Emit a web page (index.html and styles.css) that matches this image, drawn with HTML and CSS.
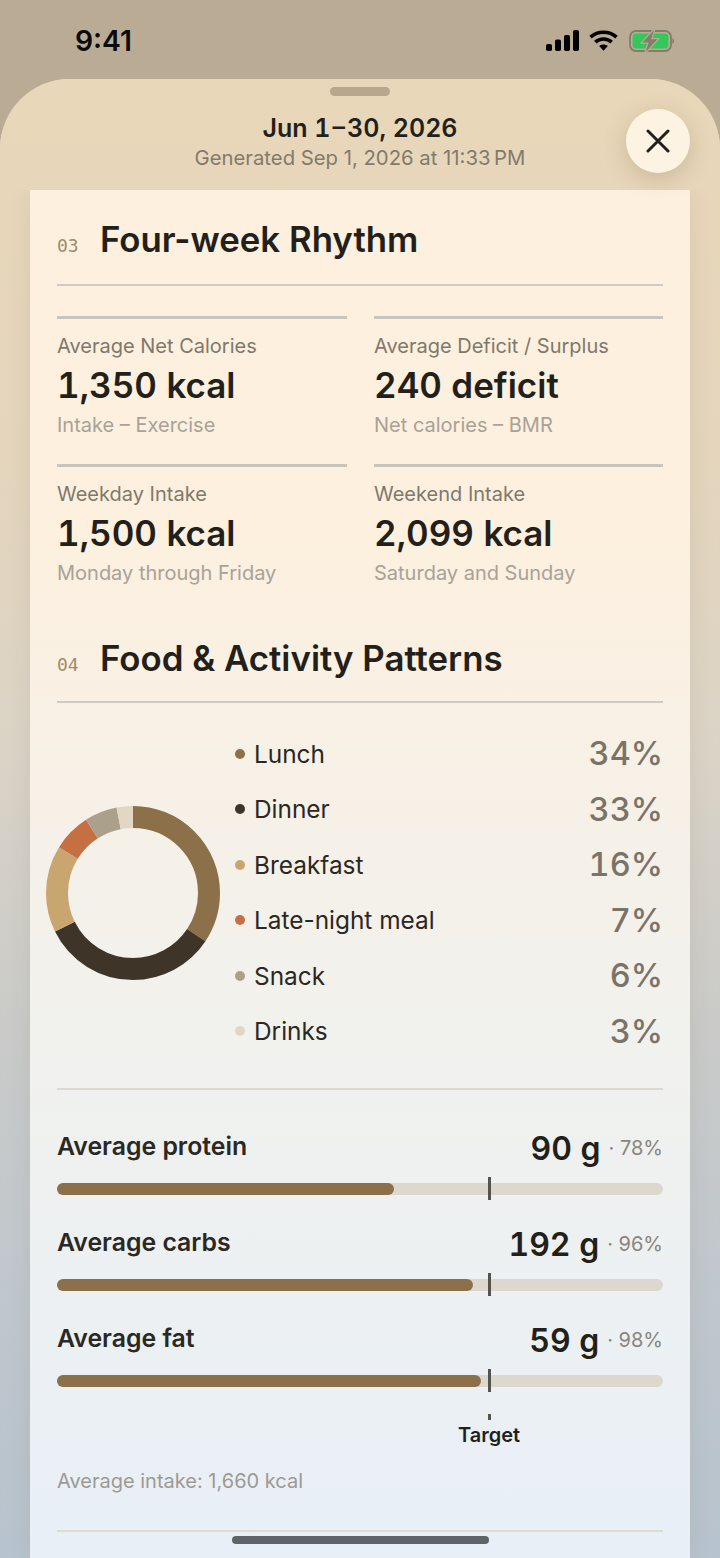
FILE: index.html
```html
<!DOCTYPE html>
<html lang="en">
<head>
<meta charset="utf-8">
<title>Report</title>
<link rel="stylesheet" href="styles.css">
</head>
<body>
<div class="screen">
  <div class="statusbar">
    <span class="time">9:41</span>
    <div class="status-icons">
      <svg class="ic-signal" width="33" height="21" viewBox="0 0 33 21"><rect x="0" y="14" width="6" height="7" rx="1.8"/><rect x="9" y="9.5" width="6" height="11.5" rx="1.8"/><rect x="18" y="5" width="6" height="16" rx="1.8"/><rect x="27" y="0" width="6" height="21" rx="1.8"/></svg>
      <svg class="ic-wifi" width="29" height="21" viewBox="0 0 29 21"><path d="M1.5 7.2C8.8 .6 20.2 .6 27.5 7.2" fill="none" stroke="#000" stroke-width="3.6"/><path d="M6.3 12.2c4.6-4.2 11.8-4.2 16.4 0" fill="none" stroke="#000" stroke-width="3.6"/><path d="M10.2 16c2.4-2 6.2-2 8.6 0l-4.3 4.8z"/></svg>
      <svg class="ic-batt" width="45" height="22" viewBox="0 0 45 22"><rect x="1" y="1" width="41" height="20" rx="6" fill="none" stroke="#857c6b" stroke-width="1.8"/><rect x="3.6" y="3.6" width="35.8" height="14.8" rx="3.6" fill="#34c759"/><path d="M43.4 8c1 .5 1.6 1.7 1.6 3s-.6 2.5-1.6 3z" fill="#857c6b"/><path d="M25 0 13.5 12.5h6.2L16.5 22 28.5 9.3h-6.4z" fill="#857c6b" stroke="#b9ab94" stroke-width="2.4" paint-order="stroke"/></svg>
    </div>
  </div>

  <div class="sheet">
    <header class="sheet-head">
      <div class="grabber"></div>
      <div class="head-title">Jun 1&#8202;–&#8202;30, 2026</div>
      <div class="head-sub">Generated Sep 1, 2026 at 11:33&#8201;PM</div>
      <button class="close" aria-label="Close">
        <svg width="24" height="24" viewBox="0 0 24 24"><path d="M2 2 22 22M22 2 2 22" fill="none" stroke="#231f1a" stroke-width="3" stroke-linecap="round"/></svg>
      </button>
    </header>

    <main class="card">
      <section class="section-rhythm">
        <div class="section-head">
          <span class="section-no">03</span>
          <h2 class="section-title">Four-week Rhythm</h2>
        </div>
        <div class="stats">
          <div class="stat">
            <div class="stat-label">Average Net Calories</div>
            <div class="stat-value">1,350 kcal</div>
            <div class="stat-sub">Intake – Exercise</div>
          </div>
          <div class="stat">
            <div class="stat-label">Average Deficit / Surplus</div>
            <div class="stat-value">240 deficit</div>
            <div class="stat-sub">Net calories – BMR</div>
          </div>
          <div class="stat">
            <div class="stat-label">Weekday Intake</div>
            <div class="stat-value">1,500 kcal</div>
            <div class="stat-sub">Monday through Friday</div>
          </div>
          <div class="stat">
            <div class="stat-label">Weekend Intake</div>
            <div class="stat-value">2,099 kcal</div>
            <div class="stat-sub">Saturday and Sunday</div>
          </div>
        </div>
      </section>

      <section class="section-food">
        <div class="section-head">
          <span class="section-no">04</span>
          <h2 class="section-title">Food &amp; Activity Patterns</h2>
        </div>
        <div class="meals">
          <svg class="donut" width="174" height="174" viewBox="0 0 174 174">
            <g fill="none" stroke-width="22" transform="rotate(-90 87 87)">
              <circle cx="87" cy="87" r="76" pathLength="99" stroke="#8b7049" stroke-dasharray="34 65" stroke-dashoffset="0"/>
              <circle cx="87" cy="87" r="76" pathLength="99" stroke="#3f3428" stroke-dasharray="33 66" stroke-dashoffset="-34"/>
              <circle cx="87" cy="87" r="76" pathLength="99" stroke="#c9a56f" stroke-dasharray="16 83" stroke-dashoffset="-67"/>
              <circle cx="87" cy="87" r="76" pathLength="99" stroke="#c66f42" stroke-dasharray="7 92" stroke-dashoffset="-83"/>
              <circle cx="87" cy="87" r="76" pathLength="99" stroke="#aba08b" stroke-dasharray="6 93" stroke-dashoffset="-90"/>
              <circle cx="87" cy="87" r="76" pathLength="99" stroke="#e3d6c2" stroke-dasharray="3 96" stroke-dashoffset="-96"/>
            </g>
          </svg>
          <ul class="legend">
            <li class="legend-row"><span class="dot dot-lunch"></span><span class="legend-name">Lunch</span><span class="legend-pct">34%</span></li>
            <li class="legend-row"><span class="dot dot-dinner"></span><span class="legend-name">Dinner</span><span class="legend-pct">33%</span></li>
            <li class="legend-row"><span class="dot dot-breakfast"></span><span class="legend-name">Breakfast</span><span class="legend-pct">16%</span></li>
            <li class="legend-row"><span class="dot dot-late"></span><span class="legend-name">Late-night meal</span><span class="legend-pct">7%</span></li>
            <li class="legend-row"><span class="dot dot-snack"></span><span class="legend-name">Snack</span><span class="legend-pct">6%</span></li>
            <li class="legend-row"><span class="dot dot-drinks"></span><span class="legend-name">Drinks</span><span class="legend-pct">3%</span></li>
          </ul>
        </div>

        <div class="macros">
          <div class="macro">
            <div class="macro-head">
              <span class="macro-name">Average protein</span>
              <span class="macro-val">90 g</span><span class="macro-pct">· 78%</span>
            </div>
            <div class="track"><div class="fill" style="width:55.6%"></div><div class="marker"></div></div>
          </div>
          <div class="macro">
            <div class="macro-head">
              <span class="macro-name">Average carbs</span>
              <span class="macro-val">192 g</span><span class="macro-pct">· 96%</span>
            </div>
            <div class="track"><div class="fill" style="width:68.6%"></div><div class="marker"></div></div>
          </div>
          <div class="macro">
            <div class="macro-head">
              <span class="macro-name">Average fat</span>
              <span class="macro-val">59 g</span><span class="macro-pct">· 98%</span>
            </div>
            <div class="track"><div class="fill" style="width:70%"></div><div class="marker"></div></div>
          </div>
          <div class="target">
            <div class="target-tick"></div>
            <div class="target-label">Target</div>
          </div>
        </div>
        <p class="note">Average intake: 1,660 kcal</p>
      </section>
      <div class="end-rule"></div>
    </main>
  </div>
  <div class="home-indicator"></div>
</div>
</body>
</html>
```
FILE: styles.css
```css
* { box-sizing: border-box; }
html, body { margin: 0; padding: 0; }
body { font-family: Inter, "Liberation Sans", sans-serif; color: #231f1a; }

.screen {
  position: relative;
  width: 720px;
  height: 1558px;
  overflow: hidden;
  display: flex;
  flex-direction: column;
  background: #b9ab94;
}

.statusbar {
  height: 79px;
  flex: none;
  display: flex;
  justify-content: space-between;
  padding: 24px 46px 0 75px;
}
.time { font-size: 28.3px; font-weight: 600; line-height: 34px; color: #0b0b0b; }
.status-icons { display: flex; gap: 11px; align-items: flex-start; padding-top: 6px; }
.ic-signal { margin-right: -1px; }

.sheet {
  flex: 1;
  min-height: 0;
  display: flex;
  flex-direction: column;
  border-radius: 70px 70px 0 0;
  background: linear-gradient(180deg, #e9d7b9 0, #e4d5bd 400px, #dcd4c6 650px, #cacbc9 940px, #c0c7cd 1220px, #b7c3ce 1479px);
  overflow: hidden;
}

.sheet-head {
  position: relative;
  z-index: 1;
  height: 111px;
  flex: none;
  text-align: center;
  padding-top: 8px;
  background: linear-gradient(180deg, #e9d7b9, #e7d6ba);
}
.grabber { width: 60px; height: 9px; border-radius: 5px; background: #b9a78d; margin: 0 auto 15px; }
.head-title { font-size: 25px; line-height: 34px; font-weight: 600; color: #231f1a; font-variant-numeric: tabular-nums; }
.head-sub { font-size: 20.3px; line-height: 26px; color: #827a6d; }

.close {
  position: absolute;
  right: 30px;
  top: 30px;
  width: 64px;
  height: 64px;
  padding: 0;
  border: 0;
  border-radius: 50%;
  background: #fdf3e2;
  box-shadow: 0 6px 22px rgba(120, 95, 60, .25);
  display: flex;
  align-items: center;
  justify-content: center;
}

.card {
  flex: 1;
  margin: 0 30px;
  padding: 0 27px;
  background: linear-gradient(180deg, #fdf0de 0%, #fdf0df 25%, #f4f1ea 52%, #eff1f0 70%, #e8eff7 100%);
  box-shadow: 0 0 24px rgba(110, 95, 70, .12);
}

.section-head {
  display: flex;
  align-items: baseline;
  gap: 20px;
  padding-bottom: 22px;
  border-bottom: 2px solid #cdcbc4;
}
.section-rhythm .section-head { padding-top: 27px; padding-bottom: 23px; }
.section-food .section-head { padding-bottom: 21px; }
.section-no { font-family: "DejaVu Sans Mono", monospace; font-size: 18px; color: #a08c6a; width: 23px; }
.section-title { margin: 0; font-size: 34.8px; line-height: 44px; font-weight: 600; color: #231f1a; }

.stats {
  display: grid;
  grid-template-columns: 290px 289px;
  column-gap: 27px;
  row-gap: 24px;
  padding-top: 30px;
}
.stat { border-top: 3px solid #c8c5bd; padding-top: 14px; height: 124px; }
.stat-label { font-size: 20px; line-height: 26px; color: #7f786c; }
.stat-value { font-size: 35px; line-height: 50px; margin-top: 1px; font-weight: 600; color: #231f1a; font-variant-numeric: tabular-nums; }
.stat-sub { font-size: 20px; line-height: 30px; color: #a9a297; }

.section-food { padding-top: 48px; }

.meals {
  display: flex;
  align-items: center;
  padding: 23px 0 29px;
  border-bottom: 2px solid #dcd9d1;
}
.donut { margin-left: -11px; flex: none; }
.legend {
  list-style: none;
  margin: 0 0 0 15px;
  padding: 0;
  flex: 1;
}
.legend-row { display: flex; align-items: center; height: 55.5px; }
.dot { width: 10px; height: 10px; border-radius: 50%; margin-right: 9px; flex: none; }
.dot-lunch { background: #8b7049; }
.dot-dinner { background: #3f3428; }
.dot-breakfast { background: #c9a56f; }
.dot-late { background: #c66f42; }
.dot-snack { background: #aba08b; }
.dot-drinks { background: #e3d6c2; }
.legend-name { flex: 1; font-size: 24.4px; color: #2b2722; }
.legend-pct { font-size: 32.5px; font-weight: 500; color: #7a7368; font-variant-numeric: tabular-nums; }

.macros { padding-top: 30px; }
.macro { height: 96px; }
.macro-head { display: flex; align-items: center; height: 52px; margin-bottom: 11px; }
.macro-name { flex: 1; font-size: 24.8px; font-weight: 600; color: #2b2722; }
.macro-val { font-size: 32px; font-weight: 600; color: #231f1a; font-variant-numeric: tabular-nums; position: relative; top: 2px; }
.macro-pct { font-size: 20px; color: #8a857c; margin-left: 8px; position: relative; top: 2px; }

.track {
  position: relative;
  height: 12px;
  border-radius: 6px;
  background: #dcd8cd;
}
.fill { height: 100%; border-radius: 6px; background: #8b7049; }
.marker {
  position: absolute;
  left: 430.5px;
  top: -6px;
  width: 3px;
  height: 23px;
  background: #55534e;
}

.target { width: 120px; margin-left: 372px; margin-top: 6px; text-align: center; }
.target-tick { width: 3px; height: 6px; background: #55534e; margin: 0 auto; }
.target-label { font-size: 20px; line-height: 30px; font-weight: 600; color: #231f1a; }

.note { margin: 17px 0 0; font-size: 20px; line-height: 28px; color: #9d9a94; }
.end-rule { margin-top: 35px; border-top: 2px solid #dedbd0; }

.home-indicator {
  position: absolute;
  left: 232px;
  top: 1536px;
  width: 257px;
  height: 8px;
  border-radius: 4px;
  background: #5f6468;
}
```
